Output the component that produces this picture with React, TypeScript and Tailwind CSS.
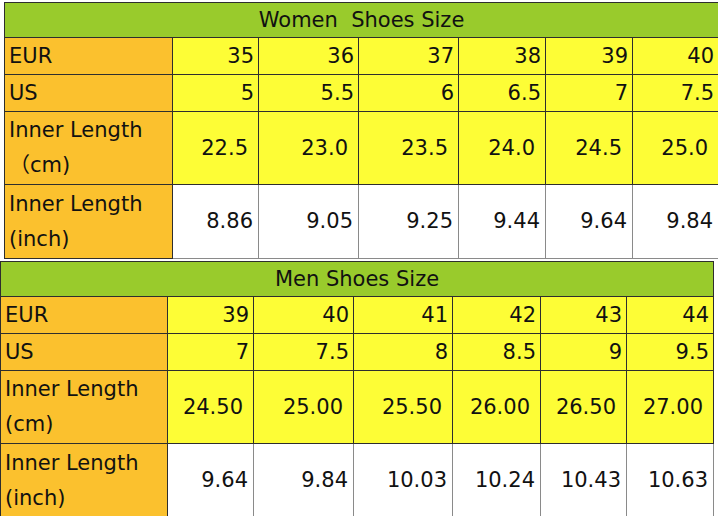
import React from "react";

type Tbl = {
  title: string;
  cols: string[];
  eur: string[];
  us: string[];
  cm: string[];
  inch: string[];
  cmLabel: string;
  tableW: string;
};

const women: Tbl = {
  title: "Women\u00a0 Shoes Size",
  cols: ["w-[168px]", "w-[86px]", "w-[100px]", "w-[100px]", "w-[87px]", "w-[87px]", "w-[86px]"],
  tableW: "w-[714px] ml-[4px] mt-[2px]",
  eur: ["35", "36", "37", "38", "39", "40"],
  us: ["5", "5.5", "6", "6.5", "7", "7.5"],
  cm: ["22.5", "23.0", "23.5", "24.0", "24.5", "25.0"],
  inch: ["8.86", "9.05", "9.25", "9.44", "9.64", "9.84"],
  cmLabel: "\uff08cm)",
};

const men: Tbl = {
  title: "Men Shoes Size",
  cols: ["w-[167px]", "w-[86px]", "w-[100px]", "w-[99px]", "w-[88px]", "w-[86px]", "w-[87px]"],
  tableW: "w-[713px] mt-[2px]",
  eur: ["39", "40", "41", "42", "43", "44"],
  us: ["7", "7.5", "8", "8.5", "9", "9.5"],
  cm: ["24.50", "25.00", "25.50", "26.00", "26.50", "27.00"],
  inch: ["9.64", "9.84", "10.03", "10.24", "10.43", "10.63"],
  cmLabel: "(cm)",
};

const labelCell = "border border-[#2e2e2e] bg-[#fbc12e] px-[4px]";
const yellowCell = "border border-[#2e2e2e] bg-[#fdfd36] text-right leading-none";

function SizeTable({ t }: { t: Tbl }) {
  return (
    <table
      className={
        "table-fixed border-collapse text-[21px] text-[#111] font-['Comic_Sans_MS','DejaVu_Sans','Noto_Sans_CJK_SC',sans-serif] " +
        t.tableW
      }
    >
      <colgroup>
        {t.cols.map((c, i) => (
          <col key={i} className={c} />
        ))}
      </colgroup>
      <tbody>
        <tr className="h-[35px]">
          <td colSpan={7} className="border border-[#2e2e2e] bg-[#99cb2c] text-center leading-none">
            {t.title}
          </td>
        </tr>
        <tr className="h-[37px]">
          <td className={labelCell + " leading-none"}>EUR</td>
          {t.eur.map((v, i) => (
            <td key={i} className={yellowCell + " pr-[4px]"}>
              {v}
            </td>
          ))}
        </tr>
        <tr className="h-[37px]">
          <td className={labelCell + " leading-none"}>US</td>
          {t.us.map((v, i) => (
            <td key={i} className={yellowCell + " pr-[4px]"}>
              {v}
            </td>
          ))}
        </tr>
        <tr className="h-[73px]">
          <td className={labelCell + " leading-[35px]"}>
            <div>Inner Length</div>
            <div>{t.cmLabel}</div>
          </td>
          {t.cm.map((v, i) => (
            <td key={i} className={yellowCell + " pr-[10px]"}>
              {v}
            </td>
          ))}
        </tr>
        <tr className="h-[74px]">
          <td className={labelCell + " leading-[35px]"}>
            <div>Inner Length</div>
            <div>(inch)</div>
          </td>
          {t.inch.map((v, i) => (
            <td key={i} className="border border-[#8a8a8a] bg-white pr-[5px] text-right leading-none">
              {v}
            </td>
          ))}
        </tr>
      </tbody>
    </table>
  );
}

export default function App() {
  return (
    <div className="w-[718px] h-[516px] overflow-hidden bg-white">
      <SizeTable t={women} />
      <SizeTable t={men} />
    </div>
  );
}
